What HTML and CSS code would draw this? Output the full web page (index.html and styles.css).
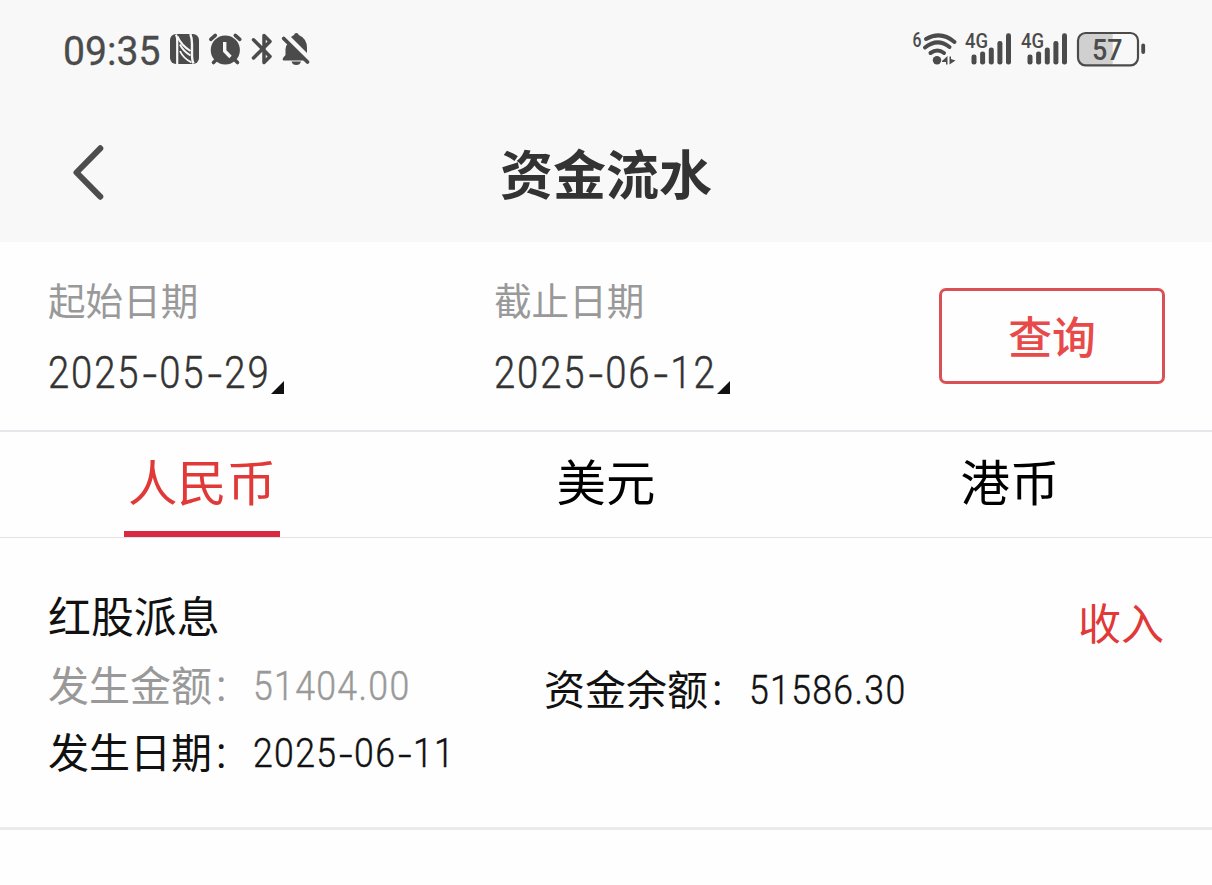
FILE: index.html
```html
<!DOCTYPE html>
<html lang="zh-CN">
<head>
<meta charset="utf-8">
<title>资金流水</title>
<link rel="stylesheet" href="styles.css">
</head>
<body>
<header class="header">
  <div class="status">
    <div class="status-left">
      <span class="time">09:35</span>
      <svg class="icons-left" viewBox="166 28 148 44" width="148" height="44">
        <rect x="170" y="34" width="29" height="30" rx="6" fill="#4b4b4b"/>
        <g fill="none" stroke="#f8f8f8">
          <path d="M176 34.500Q177.200 37 177.200 41V64" stroke-width="2.200"/>
          <path d="M190.300 34Q192 38 192 44V56Q192 60 193.500 63.500" stroke-width="2.400"/>
          <path d="M177.500 36.500Q181 45 190.500 51" stroke-width="2"/>
          <path d="M180 44.500Q183 51 190.500 55.500M180 51Q183 58 191.500 62.500" stroke-width="1.800"/>
        </g>
        <g fill="none" stroke="#4b4b4b" stroke-width="3.600" stroke-linecap="round">
          <circle cx="225.300" cy="50" r="14.600" fill="#4b4b4b" stroke="none"/>
          <path d="M210.800 39.300L215.300 35.400M235.300 35.400L239.800 39.300M213.500 62.500L217 59M237.500 62.500L234 59"/>
          <path d="M224.700 42V51L230.500 57" stroke="#f8f8f8" stroke-width="3.400" stroke-linecap="butt"/>
          <path d="M253.500 39.800L270 56.500L264 62.500V35.500L270 41.500L253.500 58" stroke-width="3.500" stroke-linejoin="round"/>
        </g>
        <g fill="#4b4b4b">
          <path d="M287.500 44L305 60.500H283.500Q282 60 283 58L285.500 55V49Q285.500 46 287.500 44Z"/>
          <path d="M291 37Q293 35.500 294 35Q294.500 33 296.300 33Q298.300 33 298.800 35Q307 38.500 307 48V53Z"/>
          <path d="M291.500 61.500H301Q300 65 296.300 65Q292.500 65 291.500 61.500Z"/>
          <path d="M283.700 38.500L307.500 62" stroke="#4b4b4b" stroke-width="3.800" stroke-linecap="round"/>
        </g>
      </svg>
    </div>
    <svg class="icons-right" viewBox="908 28 240 44" width="240" height="44">
      <g class="status-text">
        <text x="912.500" y="46.500" font-size="19.500" textLength="9" lengthAdjust="spacingAndGlyphs">6</text>
        <text x="965" y="48.300" font-size="21" textLength="23" lengthAdjust="spacingAndGlyphs">4G</text>
        <text x="1021" y="48.300" font-size="21" textLength="23" lengthAdjust="spacingAndGlyphs">4G</text>
      </g>
      <g fill="none" stroke="#4b4b4b" stroke-width="4" stroke-linecap="round">
        <path d="M926 39Q941 30.500 954.500 42M925 47.500Q937.500 37.500 949.500 47M930.500 53Q937.500 48 944 53"/>
      </g>
      <g fill="#4b4b4b">
        <circle cx="937" cy="60.300" r="4.200"/>
        <path d="M942 61L947.500 56V64.500H946V62H942ZM949.500 64.500V56.500H951V59L955.500 60.500Z"/>
        <g id="bars">
          <rect x="971.500" y="54.500" width="5" height="10" rx="2.300"/>
          <rect x="980.100" y="51.500" width="5" height="13" rx="2.300"/>
          <rect x="988.800" y="47.500" width="5" height="17" rx="2.300"/>
          <rect x="997.400" y="41" width="5" height="23.500" rx="2.300"/>
          <rect x="1006" y="33.300" width="5" height="31.200" rx="2.300"/>
        </g>
        <use href="#bars" x="56"/>
        <rect x="1141.300" y="43.500" width="3.800" height="10.500" rx="1.900"/>
      </g>
      <path d="M1085 33H1112.700V65H1085Q1078 65 1078 58V40Q1078 33 1085 33Z" fill="#d0d0d0"/>
      <rect x="1078" y="33" width="60" height="32.300" rx="7.500" fill="none" stroke="#4b4b4b" stroke-width="2.200"/>
      <text class="status-text" x="1092" y="60.200" font-size="29.500" textLength="30.500" lengthAdjust="spacingAndGlyphs">57</text>
    </svg>
  </div>
  <div class="navbar">
    <svg class="back" viewBox="0 0 34 60" width="34" height="60"><path d="M29.300 6.300L5.500 30.500L29.300 54.700" fill="none" stroke="#4d4d4d" stroke-width="6" stroke-linecap="round" stroke-linejoin="round"/></svg>
    <h1 class="title">资金流水</h1>
  </div>
</header>

<section class="filter">
  <div class="field">
    <div class="field-label">起始日期</div>
    <div class="field-value"><span class="date-box"><span class="num num-lg">2025<i class="dash">-</i>05<i class="dash">-</i>29</span></span><svg class="corner" width="13" height="13"><path d="M13 0V13H0Z" fill="#111"/></svg></div>
  </div>
  <div class="field">
    <div class="field-label">截止日期</div>
    <div class="field-value"><span class="date-box"><span class="num num-lg">2025<i class="dash">-</i>06<i class="dash">-</i>12</span></span><svg class="corner" width="13" height="13"><path d="M13 0V13H0Z" fill="#111"/></svg></div>
  </div>
  <button class="query">查询</button>
</section>

<nav class="tabs">
  <div class="tab active"><span>人民币</span></div>
  <div class="tab"><span>美元</span></div>
  <div class="tab"><span>港币</span></div>
</nav>

<article class="record">
  <div class="record-main">
    <div class="record-title">红股派息</div>
    <div class="record-row">
      <div class="pair muted"><span class="key">发生金额<i class="colon">：</i></span><span class="num">51404.00</span></div>
      <div class="pair lowered"><span class="key">资金余额<i class="colon">：</i></span><span class="num">51586.30</span></div>
    </div>
    <div class="record-row last">
      <div class="pair"><span class="key">发生日期<i class="colon">：</i></span><span class="num">2025<i class="dash">-</i>06<i class="dash">-</i>11</span></div>
    </div>
  </div>
  <div class="direction">收入</div>
</article>
</body>
</html>
```

FILE: styles.css
```css
* { box-sizing: border-box; }

body {
  margin: 0;
  background: #fefefe;
  color: #111;
  font-family: "Noto Sans CJK SC", sans-serif;
}

svg { display: block; }

.header {
  height: 242px;
  background: #f8f8f8;
}

.status {
  height: 100px;
  padding: 0 64px 0 63px;
  display: flex;
  justify-content: space-between;
  align-items: center;
}

.status-left { display: flex; align-items: center; }

.time {
  width: 103px;
  padding-top: 2px;
  font: 400 41px/44px Roboto, sans-serif;
  color: #4b4b4b;
  -webkit-text-stroke: 0.3px #4b4b4b;
  white-space: nowrap;
  transform: scaleX(0.955);
  transform-origin: left;
}

.status-text {
  font-family: Roboto, sans-serif;
  font-weight: 500;
  fill: #4b4b4b;
}

.navbar {
  height: 142px;
  padding: 0 71px;
  display: grid;
  grid-template-columns: 34px 1fr 34px;
  align-items: start;
}

.back { margin-top: 42px; }

.title {
  margin: 32px 0 0;
  font-size: 53px;
  line-height: 80px;
  font-weight: 700;
  text-align: center;
  color: #333;
}

.filter {
  height: 190px;
  padding: 32px 47px 0 48px;
  display: grid;
  grid-template-columns: 446px 1fr 226px;
  align-items: start;
  border-bottom: 2px solid #e5e5ea;
}

.field-label {
  font-size: 37.6px;
  line-height: 50px;
  color: #999;
}

.field-value {
  margin-top: 22px;
  height: 52px;
  display: flex;
  align-items: flex-end;
  color: #333;
}

.date-box { width: 223px; height: 53px; }

.corner { margin-bottom: 4px; }

/* Condensed numerals */
.num {
  display: block;
  padding-top: 3px;
  font: 300 40.5px/60px Roboto, sans-serif;
  -webkit-text-stroke: 0.45px currentColor;
  letter-spacing: 1.5px;
  white-space: nowrap;
  transform: scaleX(0.88);
  transform-origin: left;
}

.num-lg {
  width: 255px;
  font-size: 43.5px;
  line-height: 52px;
  letter-spacing: 2.1px;
}

.dash {
  display: inline-block;
  width: 19px;
  font-style: normal;
  letter-spacing: 0;
  text-align: center;
  transform: translateY(2px) scaleX(1.35);
}

.num-lg .dash { width: 21.5px; }

.query {
  height: 96px;
  margin-top: 14px;
  padding: 0 0 2px;
  border: 3px solid #da5054;
  border-radius: 7px;
  background: transparent;
  color: #e84a4a;
  font: 500 43.8px/64px "Noto Sans CJK SC", sans-serif;
}

.tabs {
  height: 106px;
  display: grid;
  grid-template-columns: repeat(3, 1fr);
  justify-items: center;
  border-bottom: 1px solid #e3e3e3;
}

.tab {
  height: 105px;
  font-size: 49.4px;
  line-height: 96px;
  color: #000;
}

.tab.active {
  width: 156px;
  text-align: center;
  color: #e13838;
  border-bottom: 6px solid #d72a42;
}

.record {
  height: 292px;
  padding: 46px 48px 0;
  display: flex;
  justify-content: space-between;
  border-bottom: 3px solid #ebebed;
}

.record-title { font-size: 42.9px; line-height: 60px; }

.record-row { display: flex; height: 60px; margin-top: 9px; }
.record-row.last { margin-top: 8px; }

.pair { width: 496px; display: flex; }
.key { width: 205px; font-size: 41px; line-height: 60px; white-space: nowrap; }
.colon { font-size: 37px; font-style: normal; font-weight: 300; }
.muted { color: #999; }
.lowered { padding-top: 4px; }
.last .key { margin-top: -1px; }
.last .num { margin-top: -1px; }

.direction {
  margin-top: 7px;
  font-size: 43px;
  line-height: 60px;
  color: #e13838;
  white-space: nowrap;
}
```
